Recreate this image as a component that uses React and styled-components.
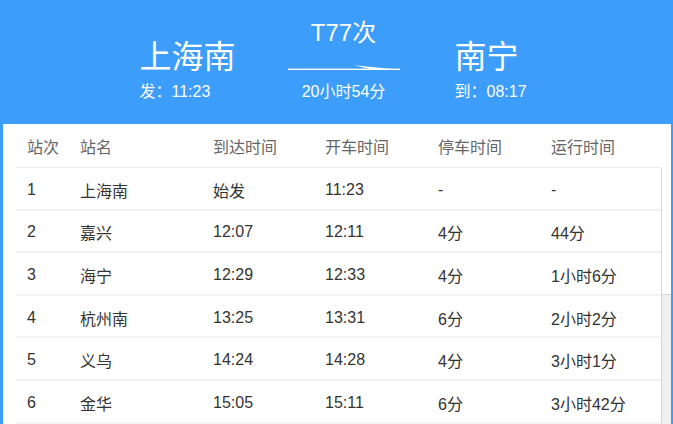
import React from 'react';
import styled, { createGlobalStyle } from 'styled-components';

const blue = '#3c9dfa';

const GlobalStyle = createGlobalStyle`
    html, body {
        margin: 0;
        padding: 0;
        height: 100%;
        overflow: hidden;
    }
    body {
        font-family: "Liberation Sans", "Noto Sans CJK SC", sans-serif;
    }
`;

const Page = styled.div`
    height: 424px;
    box-sizing: border-box;
    background-color: ${blue};
    padding: 0 2px 0 3px;
    display: flex;
    flex-direction: column;
`;

const Banner = styled.div`
    height: 124px;
    box-sizing: border-box;
    padding-bottom: 22px;
    display: flex;
    justify-content: center;
    align-items: flex-end;
    color: #fff;
`;

const Station = styled.div`
    width: ${(props) => props.width}px;
    display: flex;
    flex-direction: column;
`;

const StationName = styled.div`
    font-size: 32px;
    line-height: 40px;
    white-space: nowrap;
`;

const SubLine = styled.div`
    font-size: 16px;
    line-height: 20px;
    margin-top: 5px;
    white-space: nowrap;
`;

const Middle = styled.div`
    width: 112px;
    margin: 0 55px 0 52px;
    display: flex;
    flex-direction: column;
    align-items: center;
`;

const TrainNo = styled.div`
    font-size: 24px;
    line-height: 30px;
    margin-bottom: 2px;
`;

const Arrow = styled.svg`
    display: block;
    margin-top: 14px;
`;

const Duration = styled.div`
    font-size: 16px;
    line-height: 20px;
    margin-top: 11px;
    white-space: nowrap;
`;

const Panel = styled.div`
    flex: 1;
    min-height: 0;
    background-color: #fff;
    padding-left: 13px;
    display: flex;
    flex-direction: column;
`;

const Row = styled.div`
    display: grid;
    grid-template-columns: 53px 133px 112px 113px 113px 1fr;
    height: ${(props) => (props.head ? '44px' : '42.6px')};
    padding-top: ${(props) => (props.head ? 1 : 3)}px;
    flex-shrink: 0;
    box-sizing: border-box;
    align-items: center;
    border-bottom: ${(props) => (props.head ? '1px solid #ececec' : '2px solid #f2f2f2')};
    margin-right: ${(props) => (props.head ? 10 : 0)}px;
    color: ${(props) => (props.head ? '#666' : '#333')};
    font-size: 16px;
`;

const Cell = styled.div`
    padding-left: 11px;
    white-space: nowrap;
`;

const Body = styled.div`
    flex: 1;
    min-height: 0;
    display: flex;
`;

const Rows = styled.div`
    flex: 1;
    display: flex;
    flex-direction: column;
    overflow: hidden;
`;

const ScrollTrack = styled.div`
    width: 10px;
    box-sizing: border-box;
    background-color: #efefef;
    border-left: 1px solid #d6d6d6;
`;

const ScrollThumb = styled.div`
    height: 126px;
    background-color: #fff;
    border-bottom: 1px solid #d6d6d6;
`;

const stops = [
    ['1', '上海南', '始发', '11:23', '-', '-'],
    ['2', '嘉兴', '12:07', '12:11', '4分', '44分'],
    ['3', '海宁', '12:29', '12:33', '4分', '1小时6分'],
    ['4', '杭州南', '13:25', '13:31', '6分', '2小时2分'],
    ['5', '义乌', '14:24', '14:28', '4分', '3小时1分'],
    ['6', '金华', '15:05', '15:11', '6分', '3小时42分'],
];

const headers = ['站次', '站名', '到达时间', '开车时间', '停车时间', '运行时间'];

export default function App() {
    return (
        <>
            <GlobalStyle />
            <Page>
                <Banner>
                    <Station width={96}>
                        <StationName>上海南</StationName>
                        <SubLine>发：11:23</SubLine>
                    </Station>
                    <Middle>
                        <TrainNo>T77次</TrainNo>
                        <Arrow width="112" height="7" viewBox="0 0 112 7">
                            <rect x="0" y="4.6" width="112" height="1.4" fill="#fff" />
                            <polygon points="66,1.2 112,5.8 82,5" fill="#fff" />
                        </Arrow>
                        <Duration>20小时54分</Duration>
                    </Middle>
                    <Station width={80}>
                        <StationName>南宁</StationName>
                        <SubLine>到：08:17</SubLine>
                    </Station>
                </Banner>
                <Panel>
                    <Row head>
                        {headers.map((h) => (
                            <Cell key={h}>{h}</Cell>
                        ))}
                    </Row>
                    <Body>
                        <Rows>
                            {stops.map((stop) => (
                                <Row key={stop[0]}>
                                    {stop.map((v, i) => (
                                        <Cell key={i}>{v}</Cell>
                                    ))}
                                </Row>
                            ))}
                        </Rows>
                        <ScrollTrack>
                            <ScrollThumb />
                        </ScrollTrack>
                    </Body>
                </Panel>
            </Page>
        </>
    );
}
